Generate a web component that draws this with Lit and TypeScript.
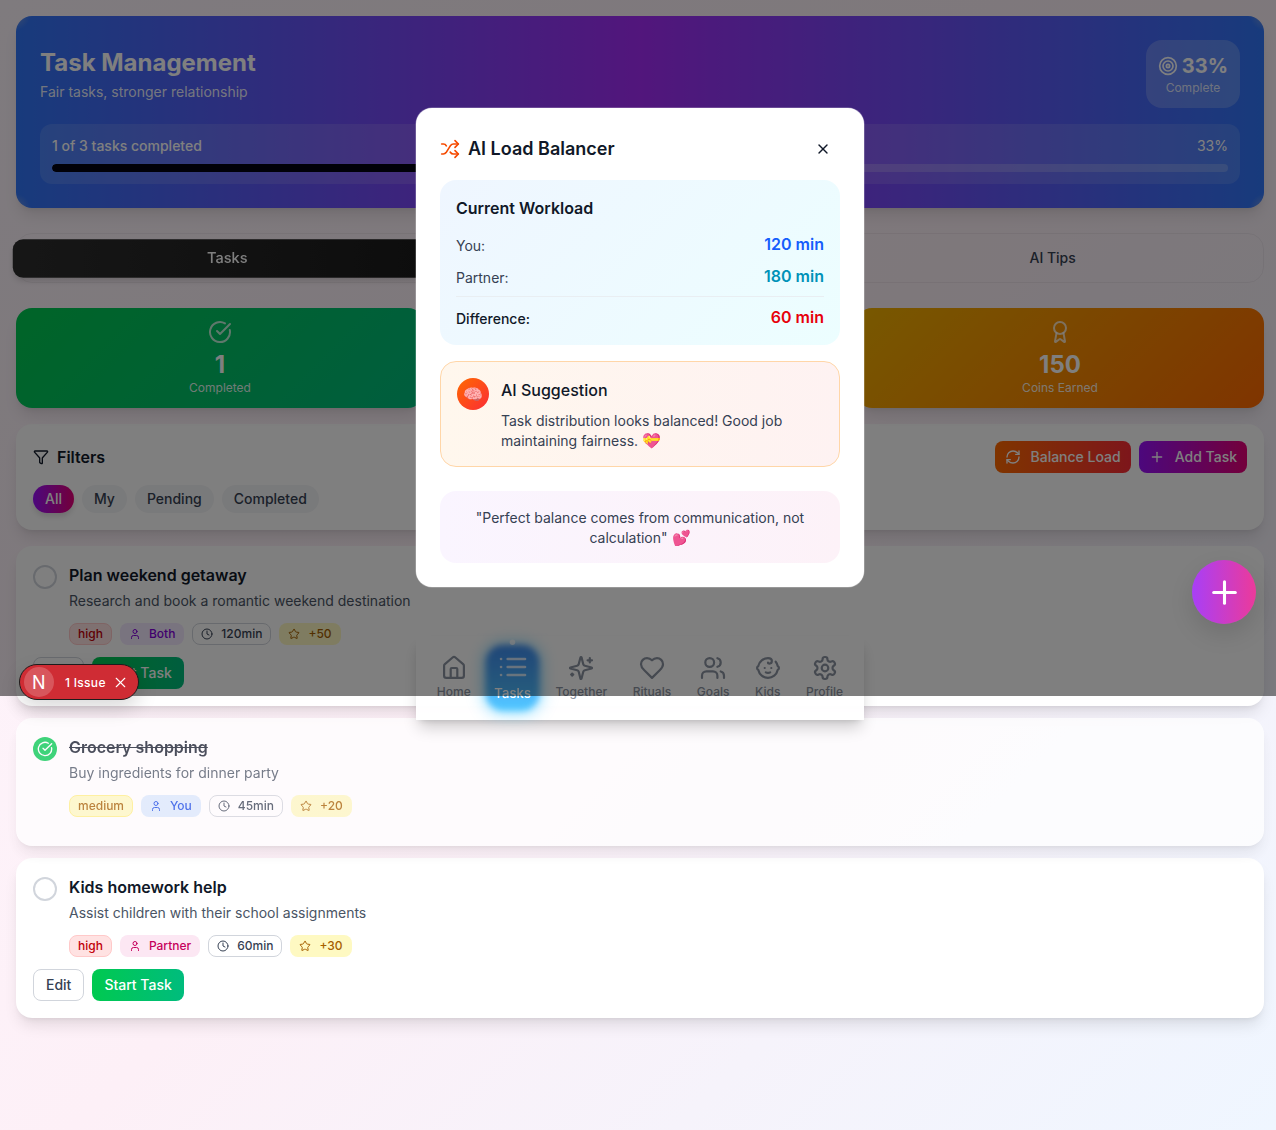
import { LitElement, html, css, svg } from "lit";
import { customElement } from "lit/decorators.js";

const P: Record<string, any> = {
  house: svg`<path d="M15 21v-8a1 1 0 0 0-1-1h-4a1 1 0 0 0-1 1v8"/><path d="M3 10a2 2 0 0 1 .709-1.528l7-5.999a2 2 0 0 1 2.582 0l7 5.999A2 2 0 0 1 21 10v9a2 2 0 0 1-2 2H5a2 2 0 0 1-2-2z"/>`,
  list: svg`<path d="M3 12h.01"/><path d="M3 18h.01"/><path d="M3 6h.01"/><path d="M8 12h13"/><path d="M8 18h13"/><path d="M8 6h13"/>`,
  sparkles: svg`<path d="M9.937 15.5A2 2 0 0 0 8.5 14.063l-6.135-1.582a.5.5 0 0 1 0-.962L8.5 9.936A2 2 0 0 0 9.937 8.5l1.582-6.135a.5.5 0 0 1 .963 0L14.063 8.5A2 2 0 0 0 15.5 9.937l6.135 1.581a.5.5 0 0 1 0 .964L15.5 14.063a2 2 0 0 0-1.437 1.437l-1.582 6.135a.5.5 0 0 1-.963 0z"/><path d="M20 3v4"/><path d="M22 5h-4"/><path d="M4 17v2"/><path d="M5 18H3"/>`,
  heart: svg`<path d="M19 14c1.49-1.46 3-3.21 3-5.5A5.5 5.5 0 0 0 16.5 3c-1.76 0-3 .5-4.5 2-1.5-1.5-2.74-2-4.5-2A5.5 5.5 0 0 0 2 8.5c0 2.3 1.5 4.05 3 5.5l7 7Z"/>`,
  users: svg`<path d="M16 21v-2a4 4 0 0 0-4-4H6a4 4 0 0 0-4 4v2"/><circle cx="9" cy="7" r="4"/><path d="M22 21v-2a4 4 0 0 0-3-3.87"/><path d="M16 3.13a4 4 0 0 1 0 7.75"/>`,
  baby: svg`<path d="M9 12h.01"/><path d="M15 12h.01"/><path d="M10 16c.5.3 1.2.5 2 .5s1.5-.2 2-.5"/><path d="M19 6.3a9 9 0 0 1 1.8 3.9 2 2 0 0 1 0 3.6 9 9 0 0 1-17.6 0 2 2 0 0 1 0-3.6A9 9 0 0 1 12 3c2 0 3.5 1.1 3.5 2.5s-.9 2.5-2 2.5c-.8 0-1.5-.4-1.5-1"/>`,
  settings: svg`<path d="M12.22 2h-.44a2 2 0 0 0-2 2v.18a2 2 0 0 1-1 1.73l-.43.25a2 2 0 0 1-2 0l-.15-.08a2 2 0 0 0-2.73.73l-.22.38a2 2 0 0 0 .73 2.73l.15.1a2 2 0 0 1 1 1.72v.51a2 2 0 0 1-1 1.74l-.15.09a2 2 0 0 0-.73 2.73l.22.38a2 2 0 0 0 2.73.73l.15-.08a2 2 0 0 1 2 0l.43.25a2 2 0 0 1 1 1.73V20a2 2 0 0 0 2 2h.44a2 2 0 0 0 2-2v-.18a2 2 0 0 1 1-1.73l.43-.25a2 2 0 0 1 2 0l.15.08a2 2 0 0 0 2.73-.73l.22-.39a2 2 0 0 0-.73-2.73l-.15-.08a2 2 0 0 1-1-1.74v-.5a2 2 0 0 1 1-1.74l.15-.09a2 2 0 0 0 .73-2.73l-.22-.38a2 2 0 0 0-2.73-.73l-.15.08a2 2 0 0 1-2 0l-.43-.25a2 2 0 0 1-1-1.73V4a2 2 0 0 0-2-2z"/><circle cx="12" cy="12" r="3"/>`,
  shuffle: svg`<path d="m18 14 4 4-4 4"/><path d="m18 2 4 4-4 4"/><path d="M2 18h1.973a4 4 0 0 0 3.3-1.7l5.454-8.6a4 4 0 0 1 3.3-1.7H22"/><path d="M2 6h1.972a4 4 0 0 1 3.6 2.2"/><path d="M22 18h-6.041a4 4 0 0 1-3.3-1.8l-.359-.45"/>`,
  x: svg`<path d="M18 6 6 18"/><path d="m6 6 12 12"/>`,
  target: svg`<circle cx="12" cy="12" r="10"/><circle cx="12" cy="12" r="6"/><circle cx="12" cy="12" r="2"/>`,
  check: svg`<path d="M21.801 10A10 10 0 1 1 17 3.335"/><path d="m9 11 3 3L22 4"/>`,
  award: svg`<path d="m15.477 12.89 1.515 8.526a.5.5 0 0 1-.81.47l-3.58-2.687a1 1 0 0 0-1.197 0l-3.586 2.686a.5.5 0 0 1-.81-.469l1.514-8.526"/><circle cx="12" cy="8" r="6"/>`,
  funnel: svg`<path d="M10 20a1 1 0 0 0 .553.895l2 1A1 1 0 0 0 14 21v-7a2 2 0 0 1 .517-1.341L21.74 4.67A1 1 0 0 0 21 3H3a1 1 0 0 0-.742 1.67l7.225 7.989A2 2 0 0 1 10 14z"/>`,
  refresh: svg`<path d="M3 12a9 9 0 0 1 9-9 9.75 9.75 0 0 1 6.74 2.74L21 8"/><path d="M21 3v5h-5"/><path d="M21 12a9 9 0 0 1-9 9 9.75 9.75 0 0 1-6.74-2.74L3 16"/><path d="M8 16H3v5"/>`,
  plus: svg`<path d="M5 12h14"/><path d="M12 5v14"/>`,
  user: svg`<path d="M19 21v-2a4 4 0 0 0-4-4H9a4 4 0 0 0-4 4v2"/><circle cx="12" cy="7" r="4"/>`,
  clock: svg`<circle cx="12" cy="12" r="10"/><path d="M12 6v6l4 2"/>`,
  star: svg`<path d="M11.525 2.295a.53.53 0 0 1 .95 0l2.31 4.679a2.123 2.123 0 0 0 1.595 1.16l5.166.756a.53.53 0 0 1 .294.904l-3.736 3.638a2.123 2.123 0 0 0-.611 1.878l.882 5.14a.53.53 0 0 1-.771.56l-4.618-2.428a2.122 2.122 0 0 0-1.973 0L6.396 21.01a.53.53 0 0 1-.77-.56l.881-5.139a2.122 2.122 0 0 0-.611-1.879L2.16 9.795a.53.53 0 0 1 .294-.906l5.165-.755a2.122 2.122 0 0 0 1.597-1.16z"/>`,
};

const ic = (n: string, s = 16, cls = "") => html`<svg class=${cls} width=${s} height=${s} viewBox="0 0 24 24" fill="none" stroke="currentColor" stroke-width="2" stroke-linecap="round" stroke-linejoin="round">${P[n]}</svg>`;

type Task = { t: string; d: string; pr: string; who: string; min: string; pts: string; done?: boolean };
const TASKS: Task[] = [
  { t: "Plan weekend getaway", d: "Research and book a romantic weekend destination", pr: "high", who: "Both", min: "120min", pts: "+50" },
  { t: "Grocery shopping", d: "Buy ingredients for dinner party", pr: "medium", who: "You", min: "45min", pts: "+20", done: true },
  { t: "Kids homework help", d: "Assist children with their school assignments", pr: "high", who: "Partner", min: "60min", pts: "+30" },
];
const NAV: [string, string][] = [["house", "Home"], ["list", "Tasks"], ["sparkles", "Together"], ["heart", "Rituals"], ["users", "Goals"], ["baby", "Kids"], ["settings", "Profile"]];

@customElement("app-root")
export class AppRoot extends LitElement {
  static styles = css`
    :host { display: block; position: relative; min-height: 1130px; font-family: Inter, "Noto Sans", sans-serif; color: #101828; background: linear-gradient(135deg, #fef6fd 0%, #fdf0f7 50%, #f6f3fb 75%, #eff6ff 100%); overflow: hidden; }
    * { box-sizing: border-box; }
    svg { display: block; flex: none; }
    .page { width: 1280px; padding: 16px; }
    .hero { height: 192px; padding: 24px; border-radius: 16px; color: #fff; background:
      radial-gradient(circle at 0 0, rgba(190,190,200,.45) 0, rgba(190,190,200,0) 14px),
      radial-gradient(circle at 100% 0, rgba(190,190,200,.45) 0, rgba(190,190,200,0) 14px),
      radial-gradient(circle at 0 100%, rgba(190,190,200,.45) 0, rgba(190,190,200,0) 14px),
      radial-gradient(circle at 100% 100%, rgba(190,190,200,.45) 0, rgba(190,190,200,0) 14px),
      linear-gradient(90deg, #3076f8 0%, #a42cf8 50%, #3076f8 100%); box-shadow: 0 10px 15px -3px rgba(0,0,0,.1), 0 4px 6px -4px rgba(0,0,0,.1); }
    .hero-top { display: flex; justify-content: space-between; align-items: center; margin-bottom: 16px; }
    h1 { margin: 1px 0 3px; font-size: 24px; line-height: 32px; font-weight: 700; }
    .sub { font-size: 14px; line-height: 20px; color: rgba(255,255,255,.9); }
    .pct { height: 68px; padding: 12px; border-radius: 16px; background: rgba(255,255,255,.2); text-align: center; }
    .pct-v { display: flex; align-items: center; gap: 4px; font-size: 20px; line-height: 28px; font-weight: 700; }
    .pct-l { font-size: 12px; line-height: 16px; color: rgba(255,255,255,.8); }
    .prog { height: 60px; padding: 12px; border-radius: 12px; background: rgba(255,255,255,.12); }
    .prog-r { display: flex; justify-content: space-between; font-size: 14px; line-height: 20px; margin-bottom: 8px; }
    .prog-r b { font-weight: 500; }
    .track { height: 8px; border-radius: 8px; background: rgba(255,255,255,.2); overflow: hidden; }
    .fill { height: 100%; background: #030213; border-radius: 8px; }
    .tabs { margin: 25px 0; height: 50px; padding: 4px; border: 1px solid rgba(0,0,0,.05); border-radius: 16px; display: grid; grid-template-columns: repeat(3, 1fr); align-items: center; }
    .tab { height: 36.5px; padding-bottom: 1px; display: flex; align-items: center; justify-content: center; font-size: 14px; font-weight: 500; color: #364153; border-radius: 10px; }
    .tab.on { color: #fff; background: linear-gradient(90deg, #2d2d2d, #1a1a1a); transform: scale(1.04); box-shadow: 0 4px 6px -1px rgba(0,0,0,.15); }
    .stats { display: grid; grid-template-columns: repeat(3, 1fr); gap: 12px; margin-bottom: 16px; }
    .stat { height: 100px; padding: 12px; border-radius: 16px; color: #fff; display: flex; flex-direction: column; align-items: center; box-shadow: 0 10px 15px -3px rgba(0,0,0,.1), 0 4px 6px -4px rgba(0,0,0,.1); }
    .stat.g { background: linear-gradient(135deg, #00c950, #00bc7d); }
    .stat.b { background: linear-gradient(135deg, #2b7fff, #00b8db); }
    .stat.y { background: linear-gradient(135deg, #f0b100, #ff6900); }
    .stat svg { margin-bottom: 5px; color: rgba(255,255,255,.75); }
    .num { font-size: 24px; line-height: 31px; font-weight: 700; }
    .lab { font-size: 12px; line-height: 16px; color: rgba(255,255,255,.9); }
    .card { background: #fff; border: 1px solid rgba(255,255,255,.2); border-radius: 16px; padding: 16px; box-shadow: 0 10px 15px -3px rgba(0,0,0,.1), 0 4px 6px -4px rgba(0,0,0,.1); }
    .filters { height: 106px; margin-bottom: 16px; }
    .f-top { display: flex; justify-content: space-between; align-items: center; height: 32px; margin-bottom: 12px; }
    .f-title { display: flex; align-items: center; gap: 8px; font-size: 16px; font-weight: 600; }
    .f-acts { display: flex; gap: 8px; }
    .btn { height: 32px; padding: 0 10px 1px; display: inline-flex; align-items: center; gap: 10px; border-radius: 8px; font-size: 14px; font-weight: 500; color: #fff; white-space: nowrap; }
    .bal { background: linear-gradient(90deg, #ff6900, #fb2c36); }
    .add { background: linear-gradient(90deg, #9810fa, #e60076); }
    .chips { display: flex; gap: 8px; }
    .chip { height: 28px; padding: 0 12px 1px; border-radius: 14px; background: #f3f4f6; color: #364153; font-size: 14px; font-weight: 500; display: flex; align-items: center; }
    .chip.on { color: #fff; background: linear-gradient(90deg, #9810fa, #e60076); box-shadow: 0 4px 6px -1px rgba(0,0,0,.15); }
    .tasks { display: flex; flex-direction: column; gap: 12px; }
    .task.done { opacity: .75; }
    .row { display: flex; gap: 12px; }
    .circle { width: 24px; height: 24px; margin-top: 2px; border-radius: 50%; border: 2px solid #d1d5dc; flex: none; }
    .circle.ok { border: 0; background: #00c950; color: #fff; display: flex; align-items: center; justify-content: center; }
    .tt { font-size: 16px; line-height: 24px; font-weight: 600; margin-bottom: 4px; }
    .done .tt { text-decoration: line-through; }
    .dd { font-size: 14px; line-height: 20px; color: #4a5565; margin-bottom: 12px; }
    .tags { display: flex; gap: 8px; }
    .tag { height: 22px; padding: 0 8px 1px; border: 1px solid transparent; border-radius: 8px; display: flex; align-items: center; gap: 8px; font-size: 12px; font-weight: 500; }
    .high { background: #ffe2e2; border-color: #ffc9c9; color: #c10007; }
    .medium { background: #fef9c2; border-color: #fff085; color: #a65f00; }
    .Both { background: #f3e8ff; color: #8200db; }
    .You { background: #dbeafe; color: #1447e6; }
    .Partner { background: #fce7f3; color: #c6005c; }
    .time { border-color: #d1d5dc; color: #364153; }
    .pts { background: #fef9c2; color: #a65f00; }
    .acts { display: flex; gap: 8px; margin-top: 12px; }
    .edit { height: 32px; padding: 0 12px 1px; border: 1px solid #d1d5dc; border-radius: 8px; font-size: 14px; font-weight: 500; color: #364153; display: flex; align-items: center; background: #fff; }
    .start { height: 32px; padding: 0 12px 1px; border-radius: 8px; font-size: 14px; font-weight: 500; color: #fff; display: flex; align-items: center; background: linear-gradient(90deg, #00c950, #00bc7d); }

    .nav { position: absolute; left: 416px; top: 636px; width: 448px; height: 84px; padding: 12px 8px; background: rgba(255,255,255,.97); display: flex; justify-content: space-around; box-shadow: 0 10px 15px -3px rgba(0,0,0,.2), 0 4px 6px -4px rgba(0,0,0,.15); }
    .nav-i { position: relative; height: 60px; padding: 8px; display: flex; flex-direction: column; align-items: center; gap: 4px; color: #8b93a1; font-size: 12px; line-height: 16px; font-weight: 500; }
    .nav-i > * { position: relative; }
    .nav-i svg { transform: scale(1.1); }
    .nav-i.on { color: #fff; transform: scale(1.1); }
    .nav-i.on::before { content: ""; position: absolute; inset: 0; border-radius: 16px; background: linear-gradient(180deg, #3f8cf0, #52c8ff); filter: blur(3px); box-shadow: 0 0 12px 3px rgba(60,200,255,.5); }
    .nav-i.on svg { transform: scale(1.21); opacity: .75; }
    .dot { position: absolute !important; top: -5px; left: 50%; width: 5px; height: 5px; margin-left: -2.5px; border-radius: 50%; background: #fff; opacity: .7; }
    .overlay { position: absolute; left: 0; top: 0; width: 1280px; height: 696px; background: rgba(0,0,0,.5); }

    .fab { position: absolute; left: 1192px; top: 560px; width: 64px; height: 64px; border-radius: 50%; background: linear-gradient(90deg, #a83ff7, #ec3a9a); color: #fff; display: flex; align-items: center; justify-content: center; box-shadow: 0 10px 25px rgba(0,0,0,.12); }
    .issue { position: absolute; left: 19px; top: 664px; width: 120px; height: 36px; border-radius: 18px; background: #cf2c34; border: 1px solid #1c1c1c; box-shadow: 0 8px 20px rgba(0,0,0,.15); color: #fff; display: flex; align-items: center; font-size: 12px; font-weight: 500; padding-left: 4px; letter-spacing: .3px; }
    .n { width: 30px; height: 30px; border-radius: 50%; background: rgba(255,255,255,.2); display: flex; align-items: center; justify-content: center; font-size: 18px; font-weight: 400; margin-right: 11px; }
    .issue svg { margin-left: 6px; }
    .issue svg path { stroke-width: 1.6; }

    .modal { position: absolute; left: 416px; top: 108px; width: 448px; height: 479px; padding: 24px; border-radius: 16px; background: #fff; box-shadow: 0 0 0 .5px rgba(255,255,255,.4); }
    .m-head { height: 33px; margin-bottom: 15px; display: flex; align-items: center; justify-content: space-between; }
    .m-title { display: flex; align-items: center; gap: 8px; font-size: 18px; font-weight: 600; }
    .m-title svg { color: #f54a00; }
    .m-head > svg { margin-right: 9px; color: #101828; }
    .load { height: 165px; padding: 16px; border-radius: 16px; background: linear-gradient(135deg, #eff6ff, #ecfeff); margin-bottom: 16px; }
    .load h3 { margin: 0 0 12px; font-size: 16px; line-height: 24px; font-weight: 600; }
    .lr { display: flex; justify-content: space-between; align-items: center; height: 24px; margin-bottom: 8px; font-size: 14px; color: #364153; }
    .lr span { padding-top: 2px; }
    .lr b { font-size: 16px; font-weight: 600; }
    .lr.diff { border-top: 1px solid #e9eef2; height: 33px; padding-top: 8px; margin: 0; color: #101828; font-weight: 500; }
    .sug { height: 106px; padding: 16px; border: 1px solid #ffd6a8; border-radius: 16px; background: linear-gradient(90deg, #fff7ed, #fef2f2); display: flex; gap: 12px; margin-bottom: 24px; }
    .bulb { width: 32px; height: 32px; border-radius: 50%; background: linear-gradient(135deg, #ff6900, #fb2c36); display: flex; align-items: center; justify-content: center; font-size: 16px; flex: none; }
    .sug h4 { margin: 0 0 9px; font-size: 16px; line-height: 24px; font-weight: 500; }
    .sug p { margin: 0; font-size: 14px; line-height: 20px; color: #364153; }
    .quote { height: 72px; padding: 17px 16px 15px; border-radius: 16px; background: linear-gradient(90deg, #faf5ff, #fdf2f8); text-align: center; font-size: 14px; line-height: 20px; color: #364153; }
    .emo { font-size: 15px; line-height: 0; }
  `;

  private task(x: Task) {
    return html`<div class="card task ${x.done ? "done" : ""}">
      <div class="row">
        ${x.done ? html`<div class="circle ok">${ic("check", 16)}</div>` : html`<div class="circle"></div>`}
        <div>
          <div class="tt">${x.t}</div>
          <div class="dd">${x.d}</div>
          <div class="tags">
            <span class="tag ${x.pr}">${x.pr}</span>
            <span class="tag ${x.who}">${ic("user", 12)}${x.who}</span>
            <span class="tag time">${ic("clock", 12)}${x.min}</span>
            <span class="tag pts">${ic("star", 12)}${x.pts}</span>
          </div>
        </div>
      </div>
      <div class="acts">${x.done ? "" : html`<span class="edit">Edit</span><span class="start">Start Task</span>`}</div>
    </div>`;
  }

  render() {
    return html`
      <div class="page">
        <section class="hero">
          <div class="hero-top">
            <div><h1>Task Management</h1><div class="sub">Fair tasks, stronger relationship</div></div>
            <div class="pct"><div class="pct-v">${ic("target", 20)}33%</div><div class="pct-l">Complete</div></div>
          </div>
          <div class="prog">
            <div class="prog-r"><b>1 of 3 tasks completed</b><span>33%</span></div>
            <div class="track"><div class="fill" style="width:33.3%"></div></div>
          </div>
        </section>
        <div class="tabs"><div class="tab on">Tasks</div><div class="tab"></div><div class="tab">AI Tips</div></div>
        <div class="stats">
          <div class="stat g">${ic("check", 24)}<div class="num">1</div><div class="lab">Completed</div></div>
          <div class="stat b"></div>
          <div class="stat y">${ic("award", 24)}<div class="num">150</div><div class="lab">Coins Earned</div></div>
        </div>
        <div class="card filters">
          <div class="f-top">
            <div class="f-title">${ic("funnel", 16)}Filters</div>
            <div class="f-acts">
              <span class="btn bal">${ic("refresh", 16)}Balance Load</span>
              <span class="btn add">${ic("plus", 16)}Add Task</span>
            </div>
          </div>
          <div class="chips"><span class="chip on">All</span><span class="chip">My</span><span class="chip">Pending</span><span class="chip">Completed</span></div>
        </div>
        <div class="tasks">${TASKS.map((t) => this.task(t))}</div>
      </div>

      <nav class="nav">
        ${NAV.map(([i, l]) => html`<div class="nav-i ${l === "Tasks" ? "on" : ""}">${l === "Tasks" ? html`<span class="dot"></span>` : ""}${ic(i, 24)}<span>${l}</span></div>`)}
      </nav>
      <div class="overlay"></div>
      <div class="fab">${ic("plus", 37)}</div>
      <div class="issue"><span class="n">N</span>1 Issue${ic("x", 17)}</div>

      <div class="modal">
        <div class="m-head">
          <div class="m-title">${ic("shuffle", 20)}AI Load Balancer</div>
          ${ic("x", 16)}
        </div>
        <div class="load">
          <h3>Current Workload</h3>
          <div class="lr"><span>You:</span><b style="color:#155dfc">120 min</b></div>
          <div class="lr"><span>Partner:</span><b style="color:#0092b8">180 min</b></div>
          <div class="lr diff"><span>Difference:</span><b style="color:#e7000b">60 min</b></div>
        </div>
        <div class="sug">
          <div class="bulb">🧠</div>
          <div><h4>AI Suggestion</h4><p>Task distribution looks balanced! Good job maintaining fairness. <span class="emo">💝</span></p></div>
        </div>
        <div class="quote">"Perfect balance comes from communication, not calculation" <span class="emo">💕</span></div>
      </div>
    `;
  }
}
